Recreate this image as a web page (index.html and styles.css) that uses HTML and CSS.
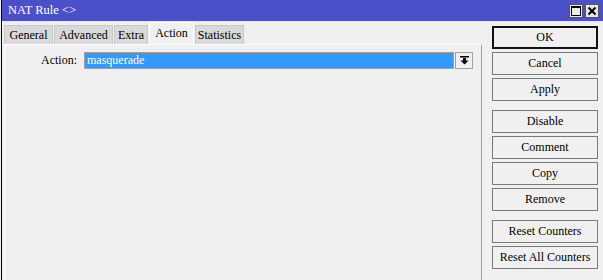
FILE: index.html
```html
<!DOCTYPE html>
<html lang="en">
<head>
  <meta charset="UTF-8" />
  <title>NAT Rule</title>
  <link rel="stylesheet" href="styles.css">
</head>
<body>
  <div class="window">
    <div class="titlebar">
      <span class="title">NAT Rule &lt;&gt;</span>
      <div class="title-btns">
        <span class="tbtn">
          <svg width="12" height="12" viewBox="0 0 12 12"><rect x="1.5" y="1.5" width="9" height="9" fill="none" stroke="#000" stroke-width="1"/><rect x="1" y="1" width="10" height="2" fill="#000"/></svg>
        </span>
        <span class="tbtn">
          <svg width="12" height="12" viewBox="0 0 12 12"><path d="M2.5 2.5 L9.5 9.5 M9.5 2.5 L2.5 9.5" stroke="#000" stroke-width="2"/></svg>
        </span>
      </div>
    </div>

    <div class="main">
      <div class="left">
        <div class="tabs">
          <div class="tab t-general">General</div>
          <div class="tab t-advanced">Advanced</div>
          <div class="tab t-extra">Extra</div>
          <div class="tab t-action active">Action</div>
          <div class="tab t-stats">Statistics</div>
        </div>
        <div class="panel">
          <div class="row">
            <label class="lbl">Action:</label>
            <div class="select">masquerade</div>
            <div class="drop">
              <svg width="9" height="9" viewBox="0 0 9 9"><rect x="0" y="0" width="9" height="1.5" fill="#000"/><rect x="3" y="2" width="3" height="3" fill="#000"/><polygon points="0.5,4.5 8.5,4.5 4.5,8.5" fill="#000"/></svg>
            </div>
          </div>
        </div>
      </div>

      <div class="side">
        <div class="group">
          <button class="btn default">OK</button>
          <button class="btn">Cancel</button>
          <button class="btn">Apply</button>
        </div>
        <div class="group">
          <button class="btn">Disable</button>
          <button class="btn">Comment</button>
          <button class="btn">Copy</button>
          <button class="btn">Remove</button>
        </div>
        <div class="group">
          <button class="btn">Reset Counters</button>
          <button class="btn">Reset All Counters</button>
        </div>
      </div>
    </div>
  </div>
</body>
</html>
```

FILE: styles.css
```css
html, body {
  margin: 0;
  height: 100%;
  overflow: hidden;
}

body {
  background: #f0f0f0;
  font-family: 'Liberation Serif', 'Times New Roman', serif;
  font-size: 12px;
  color: #000;
}

.window {
  height: 280px;
  border-left: 1px solid #000;
  margin-left: 1px;
  box-sizing: border-box;
}

.titlebar {
  height: 21px;
  background: #4b50c8;
  display: flex;
  align-items: center;
  justify-content: space-between;
  padding-left: 6px;
  box-sizing: border-box;
}

.title {
  color: #fff;
  font-size: 12.5px;
}

.title-btns {
  display: flex;
  gap: 2px;
  margin-right: 4px;
}

.tbtn {
  width: 14px;
  height: 14px;
  box-sizing: border-box;
  background: #e8e8e8;
  border: 1px solid #555;
  display: flex;
  align-items: center;
  justify-content: center;
}

.main {
  display: flex;
  padding-left: 2px;
}

.left {
  width: 478px;
}

.tabs {
  display: flex;
  align-items: flex-end;
  height: 23px;
  gap: 1px;
}

.tab {
  height: 19px;
  line-height: 18px;
  background: #d9d9d9;
  border: 1px solid #c8c8c8;
  border-bottom: none;
  box-sizing: border-box;
  text-align: center;
}

.t-general { width: 49px; }
.t-advanced { width: 59px; }
.t-extra { width: 34px; }
.t-action { width: 45px; }
.t-stats { width: 49px; }

.tab.active {
  height: 22px;
  line-height: 20px;
  background: #f0f0f0;
  border-color: #fff;
}

.panel {
  height: 236px;
  border-top: 1px solid #fff;
  border-left: 1px solid #fff;
  border-right: 1px solid #a0a0a0;
  box-sizing: border-box;
  padding-top: 7px;
}

.row {
  display: flex;
  align-items: center;
}

.lbl {
  width: 72px;
  text-align: right;
  margin-right: 7px;
}

.select {
  width: 370px;
  height: 17px;
  line-height: 15px;
  box-sizing: border-box;
  background: #3399ff;
  border: 1px solid #a0a0a0;
  color: #fff;
  padding-left: 2px;
  font-family: 'Liberation Serif', 'Times New Roman', serif;
}

.drop {
  width: 18px;
  height: 17px;
  margin-left: 1px;
  box-sizing: border-box;
  border: 1px solid #a0a0a0;
  background: #f0f0f0;
  display: flex;
  align-items: center;
  justify-content: center;
}

.side {
  margin-left: 10px;
  padding-top: 5px;
  display: flex;
  flex-direction: column;
  gap: 9px;
}

.group {
  display: flex;
  flex-direction: column;
  gap: 3px;
}

.btn {
  width: 106px;
  height: 23px;
  box-sizing: border-box;
  background: #f0f0f0;
  border: 1px solid #7a7a7a;
  font-family: 'Liberation Serif', 'Times New Roman', serif;
  font-size: 12px;
  color: #000;
  padding: 0;
}

.btn.default {
  border: 2px solid #111;
}
```
